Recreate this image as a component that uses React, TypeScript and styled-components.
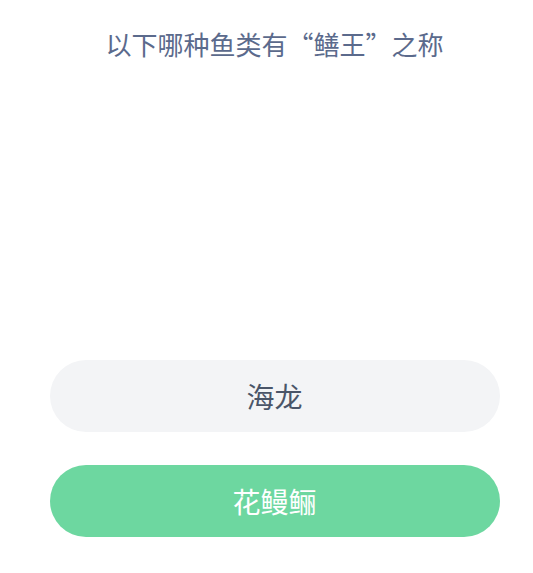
import React from "react";
import styled, { createGlobalStyle } from "styled-components";

const Global = createGlobalStyle`
  html, body { margin: 0; padding: 0; background: #ffffff; }
  body { font-family: "Noto Sans CJK SC", "Noto Sans", sans-serif; }
`;

const Page = styled.div`
  box-sizing: border-box;
  width: 533px;
  height: 573px;
  padding-left: 16px;
  display: flex;
  flex-direction: column;
  align-items: center;
  background: #ffffff;
`;

const Title = styled.h1`
  margin: 26px 0 0;
  font-size: 26px;
  line-height: 36px;
  font-weight: 400;
  color: #5b6a8c;
  text-align: center;
`;

const Options = styled.div`
  margin-top: 298px;
  display: flex;
  flex-direction: column;
  gap: 33px;
`;

const Option = styled.button<{ $correct?: boolean }>`
  width: 450px;
  height: 72px;
  border: none;
  border-radius: 36px;
  background: ${(p) => (p.$correct ? "#6dd7a0" : "#f3f4f6")};
  color: ${(p) => (p.$correct ? "#ffffff" : "#4a5568")};
  font-family: "Noto Sans CJK SC", "Noto Sans", sans-serif;
  font-size: 28px;
  font-weight: 400;
  display: flex;
  align-items: center;
  justify-content: center;
  padding: 0;
`;

export default function App() {
  return (
    <Page>
      <Global />
      <Title>以下哪种鱼类有“鳝王”之称</Title>
      <Options>
        <Option>海龙</Option>
        <Option $correct>花鳗鲡</Option>
      </Options>
    </Page>
  );
}
